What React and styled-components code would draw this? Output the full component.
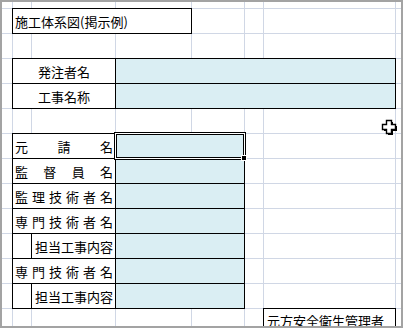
import React from "react";
import styled, { createGlobalStyle } from "styled-components";

const GlobalStyle = createGlobalStyle`
  html, body {
    margin: 0;
    padding: 0;
    background: #ffffff;
  }
  body {
    font-family: "Noto Sans CJK JP", "Noto Sans", sans-serif;
    color: #000000;
  }
`;

const COLS = 8;
const ROWS = 14;

const Frame = styled.div`
  width: 403px;
  height: 328px;
  box-sizing: border-box;
  border: 2px solid #a3a3a3;
  overflow: hidden;
  background: #ffffff;
`;

const Sheet = styled.div`
  position: relative;
  display: grid;
  grid-template-columns: 10px 18px 83px 75px 52px 18px 131px 1fr;
  grid-template-rows: 6px repeat(13, 24px);
  gap: 1px;
  background: #d0d7e5;
  font-size: 13px;
  line-height: 1;
`;

const GridCell = styled.div`
  grid-column: ${({ $c }) => $c};
  grid-row: ${({ $r }) => $r};
  background: #ffffff;
`;

const Box = styled.div`
  grid-column: ${({ $col }) => $col};
  grid-row: ${({ $row }) => $row};
  display: flex;
  align-items: ${({ $valign }) => $valign || "center"};
  justify-content: ${({ $align }) => $align || "flex-start"};
  padding: 1px ${({ $pad }) => $pad ?? 2}px 0;
  background: ${({ $fill }) => ($fill ? "#daeef3" : "#ffffff")};
  box-shadow: 0 0 0 1px #000000;
  white-space: nowrap;
`;

const Spread = styled(Box)`
  justify-content: space-between;
`;

const Selected = styled(Box)`
  position: relative;
  box-shadow: inset 0 0 0 1px #000000, 0 0 0 1px #ffffff, 0 0 0 2px #000000;
  z-index: 1;
`;

const FillHandle = styled.span`
  position: absolute;
  right: -3px;
  bottom: -3px;
  width: 4px;
  height: 4px;
  background: #000000;
  border: 1px solid #ffffff;
`;

const Note = styled(Box)`
  padding-top: 5px;
`;

const Cursor = styled.svg`
  position: absolute;
  left: 379px;
  top: 117px;
  z-index: 2;
`;

const Distributed = ({ text, ...rest }) => (
  <Spread {...rest}>
    {[...text].map((ch, i) => (
      <span key={i}>{ch}</span>
    ))}
  </Spread>
);

const CROSS = "M5.5 1.5h5v4h4v5h-4v4h-5v-4h-4v-5h4z";

export default function App() {
  const cells = [];
  for (let r = 1; r <= ROWS; r++) {
    for (let c = 1; c <= COLS; c++) {
      cells.push(<GridCell key={`${r}-${c}`} $c={c} $r={r} />);
    }
  }

  return (
    <>
      <GlobalStyle />
      <Frame>
        <Sheet>
          {cells}

          <Box $col="2 / 5" $row={2}>施工体系図(掲示例)</Box>

          <Box $col="2 / 4" $row={4} $align="center">発注者名</Box>
          <Box $col="4 / 8" $row={4} $fill />
          <Box $col="2 / 4" $row={5} $align="center">工事名称</Box>
          <Box $col="4 / 8" $row={5} $fill />

          <Distributed $col="2 / 4" $row={7} text="元請名" />
          <Selected $col="4 / 6" $row={7} $fill>
            <FillHandle />
          </Selected>

          <Distributed $col="2 / 4" $row={8} text="監督員名" />
          <Box $col="4 / 6" $row={8} $fill />

          <Distributed $col="2 / 4" $row={9} text="監理技術者名" />
          <Box $col="4 / 6" $row={9} $fill />

          <Distributed $col="2 / 4" $row={10} text="専門技術者名" />
          <Box $col="4 / 6" $row={10} $fill />

          <Box $col="2 / 3" $row={11} />
          <Box $col="3 / 4" $row={11} $align="flex-end">担当工事内容</Box>
          <Box $col="4 / 6" $row={11} $fill />

          <Distributed $col="2 / 4" $row={12} text="専門技術者名" />
          <Box $col="4 / 6" $row={12} $fill />

          <Box $col="2 / 3" $row={13} />
          <Box $col="3 / 4" $row={13} $align="flex-end">担当工事内容</Box>
          <Box $col="4 / 6" $row={13} $fill />

          <Note $col="7 / 8" $row={14} $pad={3} $valign="flex-start">
            元方安全衛生管理者
          </Note>

          <Cursor width="18" height="18" viewBox="0 0 18 18">
            <path d={CROSS} fill="#000000" transform="translate(1.5 1.5)" />
            <path
              d={CROSS}
              fill="#ffffff"
              stroke="#000000"
              strokeWidth="1.4"
              strokeLinejoin="miter"
            />
          </Cursor>
        </Sheet>
      </Frame>
    </>
  );
}
